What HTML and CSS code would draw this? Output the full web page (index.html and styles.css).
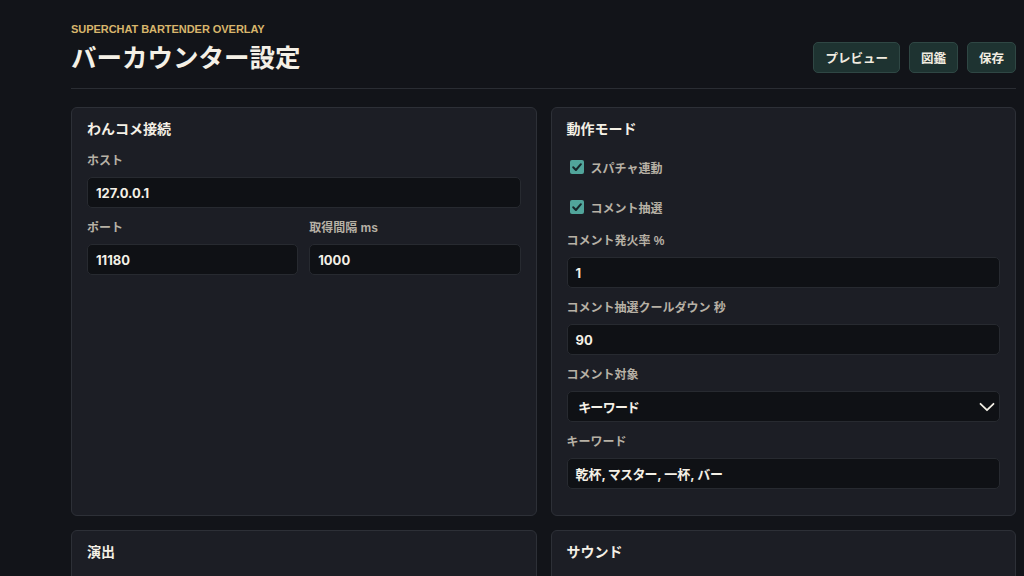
FILE: index.html
```html
<!DOCTYPE html>
<html lang="ja">
<head>
<meta charset="utf-8">
<title>バーカウンター設定</title>
<link rel="stylesheet" href="styles.css">
</head>
<body>
<div class="page">
  <header class="header">
    <div class="heading">
      <div class="eyebrow">SUPERCHAT BARTENDER OVERLAY</div>
      <h1 class="title">バーカウンター設定</h1>
    </div>
    <div class="actions">
      <button class="btn">プレビュー</button>
      <button class="btn">図鑑</button>
      <button class="btn">保存</button>
    </div>
  </header>

  <main class="grid">
    <section class="card">
      <h2 class="card-title">わんコメ接続</h2>
      <div class="field">
        <label class="label">ホスト</label>
        <div class="input">127.0.0.1</div>
      </div>
      <div class="row">
        <div class="field">
          <label class="label">ポート</label>
          <div class="input">11180</div>
        </div>
        <div class="field">
          <label class="label">取得間隔 ms</label>
          <div class="input">1000</div>
        </div>
      </div>
    </section>

    <section class="card">
      <h2 class="card-title">動作モード</h2>
      <div class="check-row">
        <span class="check"><svg viewBox="0 0 14 14" width="14" height="14"><path d="M3.2 7.3 L5.9 10 L10.9 4.2" fill="none" stroke="#17262a" stroke-width="2" stroke-linecap="round" stroke-linejoin="round"/></svg></span>
        <span class="check-label">スパチャ連動</span>
      </div>
      <div class="check-row">
        <span class="check"><svg viewBox="0 0 14 14" width="14" height="14"><path d="M3.2 7.3 L5.9 10 L10.9 4.2" fill="none" stroke="#17262a" stroke-width="2" stroke-linecap="round" stroke-linejoin="round"/></svg></span>
        <span class="check-label">コメント抽選</span>
      </div>
      <div class="field">
        <label class="label">コメント発火率 %</label>
        <div class="input">1</div>
      </div>
      <div class="field">
        <label class="label">コメント抽選クールダウン 秒</label>
        <div class="input">90</div>
      </div>
      <div class="field">
        <label class="label">コメント対象</label>
        <div class="input select">
          <span>キーワード</span>
          <svg class="chev" viewBox="0 0 16 10" width="16" height="10"><path d="M1.5 1.8 L8 8.2 L14.5 1.8" fill="none" stroke="#f2eee4" stroke-width="1.8" stroke-linecap="round" stroke-linejoin="round"/></svg>
        </div>
      </div>
      <div class="field">
        <label class="label">キーワード</label>
        <div class="input">乾杯, マスター, 一杯, バー</div>
      </div>
    </section>

    <section class="card">
      <h2 class="card-title">演出</h2>
      <div class="field">
        <label class="label">表示時間 秒</label>
        <div class="input">8</div>
      </div>
    </section>

    <section class="card">
      <h2 class="card-title">サウンド</h2>
      <div class="field">
        <label class="label">音量</label>
        <div class="input">0.6</div>
      </div>
    </section>
  </main>
</div>
</body>
</html>
```

FILE: styles.css
```css
* { box-sizing: border-box; }

html, body {
  margin: 0;
  padding: 0;
  background: #121419;
  overflow: hidden;
}

body {
  font-family: "Liberation Sans", "Noto Sans CJK JP", sans-serif;
  color: #f2eee4;
}

.page {
  width: 1024px;
  padding: 22px 8px 40px 71px;
}

.header {
  display: flex;
  justify-content: space-between;
  align-items: flex-end;
  padding-bottom: 13px;
  border-bottom: 1px solid #2a2d33;
}

.eyebrow {
  font-size: 11px;
  line-height: 14px;
  font-weight: 700;
  color: #d8b66c;
  letter-spacing: -0.05px;
}

.title {
  margin: 5px 0 0;
  font-size: 25.5px;
  line-height: 34px;
  font-weight: 700;
  color: #f4f0e6;
}

.actions {
  display: flex;
  gap: 9px;
  margin-bottom: 2px;
}

.btn {
  height: 31px;
  padding: 0 11px;
  border: 1px solid #2f4744;
  border-radius: 5px;
  background: #1e3331;
  color: #f1ece0;
  font-family: "Liberation Sans", "Noto Sans CJK JP", sans-serif;
  font-size: 12.5px;
  font-weight: 700;
}

.grid {
  margin-top: 18px;
  display: grid;
  grid-template-columns: 1fr 1fr;
  gap: 14px;
}

.card {
  background: #1c1e25;
  border: 1px solid #2d3037;
  border-radius: 6px;
  padding: 11px 15px 26px;
  display: flex;
  flex-direction: column;
  gap: 12px;
}

.card-title {
  margin: 0 0 2px;
  font-size: 14px;
  line-height: 20px;
  font-weight: 700;
  color: #f4f0e6;
}

.field {
  display: flex;
  flex-direction: column;
  gap: 8px;
  min-width: 0;
}

.row {
  display: grid;
  grid-template-columns: 1fr 1fr;
  gap: 11px;
}

.label {
  font-size: 12px;
  line-height: 16px;
  font-weight: 700;
  color: #b7b1a5;
}

.input {
  height: 31px;
  display: flex;
  align-items: center;
  padding: 0 8px;
  background: #0f1115;
  border: 1px solid #272a30;
  border-radius: 5px;
  font-family: Inter, "Noto Sans CJK JP", sans-serif;
  font-size: 13px;
  font-weight: 700;
  color: #f4f0e6;
  font-feature-settings: "palt";
}

.select {
  justify-content: space-between;
  padding: 0 4px 0 11px;
}

.chev {
  display: block;
}

.check-row {
  height: 28px;
  display: flex;
  align-items: center;
  gap: 7px;
  padding-left: 3px;
}

.check {
  width: 14px;
  height: 14px;
  border-radius: 2px;
  background: #51a59b;
  display: flex;
}

.check svg {
  display: block;
}

.check-label {
  font-size: 12px;
  font-weight: 700;
  color: #b7b1a5;
}
```
